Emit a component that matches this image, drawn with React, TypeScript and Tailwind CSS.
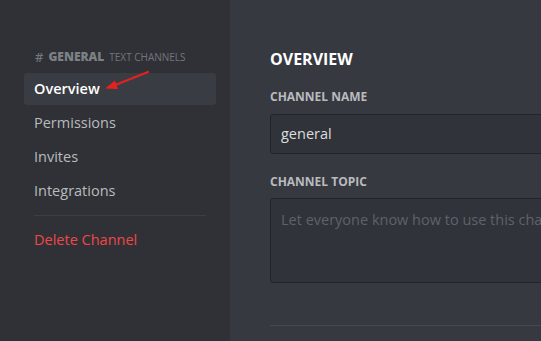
import React from 'react';

const navItems = ['Overview', 'Permissions', 'Invites', 'Integrations'];

const PointerArrow: React.FC = () => (
  <svg className="absolute left-[100px] top-[66px]" width="54" height="28" viewBox="0 0 54 28">
    <line x1="48" y1="6" x2="14" y2="19.5" stroke="#e3211f" strokeWidth="2.2" strokeLinecap="round" />
    <polygon points="5,22.5 15,14.5 18,23" fill="#e3211f" />
  </svg>
);

const App: React.FC = () => {
  const active = 'Overview';

  return (
    <div
      className="relative flex h-[341px] w-[541px] overflow-hidden bg-[#36393f]"
      style={{ fontFamily: '"Open Sans", "Noto Sans", sans-serif' }}
    >
      {/* sidebar */}
      <div className="w-[230px] shrink-0 bg-[#2f3136] pl-[24px] pr-[14px] pt-[49px]">
        <div className="mb-[8px] flex h-[16px] items-center px-[11px] text-[#72767d]">
          <span className="text-[13px] font-semibold leading-none">#</span>
          <span className="ml-[5px] text-[12px] font-extrabold leading-none text-[#7d8187]">GENERAL</span>
          <span className="ml-[5px] text-[10px] leading-none">TEXT CHANNELS</span>
        </div>

        {navItems.map(item => (
          <div
            key={item}
            className={
              item === active
                ? 'mb-[2px] flex h-[32px] items-center rounded-[3px] bg-[#393c43] px-[10px] text-[14.5px] font-semibold text-white'
                : 'mb-[2px] flex h-[32px] items-center rounded-[3px] px-[10px] text-[14.5px] font-medium text-[#b9bbbe]'
            }
          >
            {item}
          </div>
        ))}

        <div className="mx-[10px] my-[8px] h-px bg-[#3b3e44]" />

        <div className="flex h-[32px] items-center px-[10px] text-[14.5px] font-medium text-[#f04747]">
          Delete Channel
        </div>
      </div>

      {/* main */}
      <div className="w-[700px] shrink-0 pl-[40px] pt-[49px]">
        <div className="flex h-[20px] items-center text-[16px] font-bold text-white">OVERVIEW</div>

        <div className="mt-[20px] flex h-[16px] items-center text-[12px] font-bold text-[#b9bbbe]">CHANNEL NAME</div>
        <div className="mt-[9px] flex h-[40px] w-[640px] items-center rounded-[3px] border border-[#222428] bg-[#303339] px-[10px] text-[14.5px] text-[#dcddde]">
          general
        </div>

        <div className="mt-[20px] flex h-[16px] items-center text-[12px] font-bold text-[#b9bbbe]">CHANNEL TOPIC</div>
        <div className="mt-[8px] h-[85px] w-[640px] overflow-hidden rounded-[3px] border border-[#222428] bg-[#303339] px-[10px] pt-[10px] text-[14.5px] leading-[22px] text-[#5f6268]">
          Let everyone know how to use this channel!
        </div>

        <div className="mt-[42px] h-px w-[640px] bg-[#45484e]" />
      </div>

      <PointerArrow />
    </div>
  );
};

export default App;
